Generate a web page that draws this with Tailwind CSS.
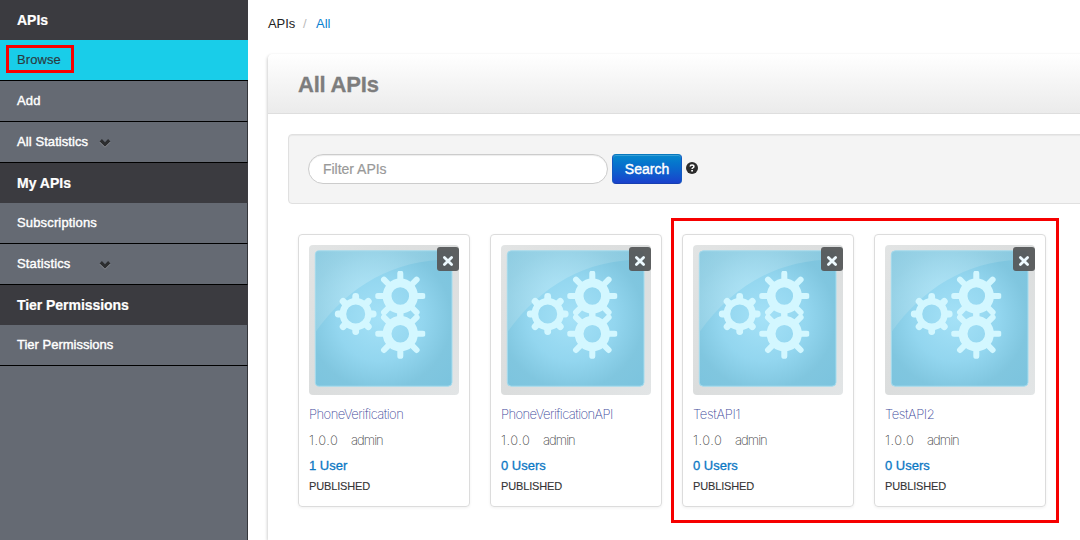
<!DOCTYPE html>
<html lang="en">
<head>
<meta charset="utf-8">
<title>All APIs</title>
<script src="https://cdn.jsdelivr.net/npm/@tailwindcss/browser@4"></script>
</head>
<body class="relative flex h-[540px] w-[1080px] overflow-hidden bg-white font-['Liberation_Sans',Arial,sans-serif] text-[13px] leading-5 text-[#333]">

<svg class="absolute size-0">
  <defs>
    <radialGradient id="sky" cx="0.47" cy="0.5" r="0.7">
      <stop offset="0" stop-color="#a4e1f7"/>
      <stop offset="0.45" stop-color="#93d6ef"/>
      <stop offset="0.75" stop-color="#80c6df"/>
      <stop offset="1" stop-color="#7cc4de"/>
    </radialGradient>
    <linearGradient id="frame" x1="0" y1="0" x2="1" y2="1">
      <stop offset="0" stop-color="#e2e4e4"/>
      <stop offset="0.5" stop-color="#dbdddd"/>
      <stop offset="1" stop-color="#e2e5e6"/>
    </linearGradient>
    <radialGradient id="gloss" gradientUnits="userSpaceOnUse" cx="58" cy="50" r="80">
      <stop offset="0" stop-color="#b4e6f7" stop-opacity="0.8"/>
      <stop offset="1" stop-color="#a0d2e2" stop-opacity="0.4"/>
    </radialGradient>
  </defs>
  <symbol id="tooth-ring" viewBox="-25 -25 50 50">
    <circle r="13.2" fill="none" stroke="#d3f7ff" stroke-width="8.8"/>
    <path d="M0-15V-22.5M0 15V22.5M-15 0H-22.5M15 0H22.5M-11-11L-16.3-16.3M11-11L16.3-16.3M-11 11L-16.3 16.3M11 11L16.3 16.3" stroke="#d3f7ff" stroke-width="6" stroke-linecap="round"/>
  </symbol>
  <symbol id="small-ring" viewBox="-25 -25 50 50">
    <circle r="12.8" fill="none" stroke="#d3f7ff" stroke-width="6.6"/>
    <path d="M0-14V-17.5M0 14V17.5M-14 0H-17.5M14 0H17.5M-10-10L-12.6-12.6M10-10L12.6-12.6M-10 10L-12.6 12.6M10 10L12.6 12.6" stroke="#d3f7ff" stroke-width="6.8" stroke-linecap="round"/>
  </symbol>
  <symbol id="tile" viewBox="0 0 150 150">
    <rect width="150" height="150" rx="4" fill="url(#frame)"/>
    <rect x="6.3" y="5.8" width="136.7" height="135.4" rx="4" fill="url(#sky)" stroke="#a5dcee"/>
    <path d="M6.5 87V10Q6.5 6 10.5 6H139Q143 6 143 10V14.5C86 14 40 40 6.5 87Z" fill="url(#gloss)"/>
    <use href="#tooth-ring" x="66.3" y="26" width="50" height="50"/>
    <use href="#tooth-ring" x="66.3" y="63.7" width="50" height="50"/>
    <use href="#small-ring" x="21.7" y="44" width="50" height="50"/>
  </symbol>
  <symbol id="chevron" viewBox="0 0 12 10">
    <path d="M.6 3.4L2.9 1.1 6 4.2 9.1 1.1 11.4 3.4 6 8.7Z" fill="#9a9da2" transform="translate(0 .8)"/>
    <path d="M.6 3.4L2.9 1.1 6 4.2 9.1 1.1 11.4 3.4 6 8.7Z" fill="#2d2e30"/>
  </symbol>
  <symbol id="close" viewBox="0 0 12 12">
    <path d="M2.4 2.4L9.6 9.6M9.6 2.4L2.4 9.6" stroke="#eefaff" stroke-width="2.8" stroke-linecap="round"/>
  </symbol>
</svg>

<aside class="flex w-[248px] shrink-0 flex-col border-r border-[#34363b] bg-[#656a73] text-white">
  <h2 class="-mr-px h-10 bg-[#3b3b40] px-[17px] pt-[10px] text-[14px] font-bold [-webkit-text-stroke:0.2px_white]">APIs</h2>
  <a class="-mr-px h-[41px] border-b border-black bg-[#19cde9] px-[17px] pt-[10px] tracking-[0.1px] text-[#2b3a40] [-webkit-text-stroke:0.15px_#2b3a40]">Browse</a>
  <a class="-mr-px h-[41px] border-r border-b border-black border-r-[#34363b] px-[17px] pt-[10px] tracking-[0.2px] [-webkit-text-stroke:0.4px_white]">Add</a>
  <a class="-mr-px flex h-[41px] border-r border-b border-black border-r-[#34363b] px-[17px] pt-[10px] [-webkit-text-stroke:0.4px_white]"><span class="w-[82px] tracking-[0.08px]">All Statistics</span><svg class="mt-[6px] h-[10px] w-3"><use href="#chevron"/></svg></a>
  <h2 class="-mr-px h-10 bg-[#3b3b40] px-[17px] pt-[10px] text-[14px] font-bold [-webkit-text-stroke:0.2px_white]">My APIs</h2>
  <a class="-mr-px h-[41px] border-r border-b border-black border-r-[#34363b] px-[17px] pt-[10px] tracking-[0.15px] [-webkit-text-stroke:0.4px_white]">Subscriptions</a>
  <a class="-mr-px flex h-[41px] border-r border-b border-black border-r-[#34363b] px-[17px] pt-[10px] [-webkit-text-stroke:0.4px_white]"><span class="w-[82px] tracking-[0.15px]">Statistics</span><svg class="mt-[6px] h-[10px] w-3"><use href="#chevron"/></svg></a>
  <h2 class="-mr-px h-10 bg-[#3b3b40] px-[17px] pt-[10px] text-[14px] font-bold tracking-[-0.05px] [-webkit-text-stroke:0.2px_white]">Tier Permissions</h2>
  <a class="-mr-px h-[41px] border-r border-b border-black border-r-[#34363b] px-[17px] pt-[10px] [-webkit-text-stroke:0.4px_white]">Tier Permissions</a>
</aside>

<main class="flex w-[852px] shrink-0 flex-col pl-5">
  <nav class="flex h-[54px] pt-[14px]">
    <span class="w-[35px] tracking-[-0.1px] text-[#222]">APIs</span><span class="w-[13px] text-[#bbb]">/</span><a class="text-[#0a7fd0]">All</a>
  </nav>
  <section class="flex grow flex-col rounded-tl-[5px] shadow-[-1px_1px_3px_rgba(0,0,0,0.18)]">
    <header class="h-[60px] rounded-tl-[5px] border-b border-[#dedede] bg-linear-to-b from-white to-[#ebebeb] pt-4 pl-[30px]">
      <h1 class="text-[22px] leading-[30px] font-bold tracking-[-0.2px] text-[#7d7d7d] [-webkit-text-stroke:0.3px_#7d7d7d]">All APIs</h1>
    </header>
    <div class="mt-5 ml-5 flex h-[70px] rounded-[4px] border border-[#e0e0e0] bg-[#f4f4f4] pt-[19px] pl-[19px] shadow-[inset_0_1px_1px_rgba(0,0,0,0.05)]">
      <div class="h-[30px] w-[300px] rounded-full border border-[#ccc] bg-white pt-1 pl-[14px] text-[14px] tracking-[-0.02px] text-[#999] shadow-[inset_0_1px_1px_rgba(0,0,0,0.075)] [-webkit-text-stroke:0.2px_#999]">Filter APIs</div>
      <button class="ml-1 h-[30px] w-[70px] rounded-[4px] border border-[#1459c0] border-t-[#0878bd] border-b-[#163fb0] bg-linear-to-b from-[#0788cc] to-[#1a40cc] text-[14px] leading-5 text-white shadow-[inset_0_1px_0_rgba(255,255,255,0.2)] [-webkit-text-stroke:0.4px_white]">Search</button>
      <svg class="mt-2 ml-1 size-3" viewBox="0 0 12 12"><circle cx="6" cy="6" r="6" fill="#2c2c2c"/><path d="M4.2 4.6Q4.2 3 6 3Q7.9 3 7.9 4.5Q7.9 5.4 6.8 5.9Q6.1 6.2 6.1 6.9" fill="none" stroke="white" stroke-width="1.5"/><path d="M5.2 8H7V9.5H5.2Z" fill="white"/></svg>
    </div>
    <div class="mt-[30px] ml-[30px] flex gap-5">
      <article class="relative h-[273px] w-[172px] rounded-[4px] border border-[#dcdcdc] p-[10px] shadow-[0_1px_3px_rgba(0,0,0,0.06)]">
        <svg class="block size-[150px]"><use href="#tile"/></svg>
        <button class="absolute top-3 right-[10px] flex h-6 w-[22px] justify-center rounded-[3px] bg-[#56595a]/95 pt-2"><svg class="size-3"><use href="#close"/></svg></button>
        <h3 class="mt-[9px] font-['Inter',sans-serif] text-[13px] leading-5 font-extralight tracking-[-0.54px] text-[#3f4c9c]">PhoneVerification</h3>
        <p class="mt-[6px] flex font-['Inter',sans-serif] text-[13px] leading-5 font-extralight text-[#444]"><span class="w-[42px] tracking-[0.5px]">1.0.0</span><span class="tracking-[-0.95px]">admin</span></p>
        <p class="mt-[6px] text-[#0b78c4] [-webkit-text-stroke:0.3px_#0b78c4]">1 User</p>
        <p class="text-[11px] tracking-[-0.15px] text-[#333] [-webkit-text-stroke:0.1px_#333]">PUBLISHED</p>
      </article>
      <article class="relative h-[273px] w-[172px] rounded-[4px] border border-[#dcdcdc] p-[10px] shadow-[0_1px_3px_rgba(0,0,0,0.06)]">
        <svg class="block size-[150px]"><use href="#tile"/></svg>
        <button class="absolute top-3 right-[10px] flex h-6 w-[22px] justify-center rounded-[3px] bg-[#56595a]/95 pt-2"><svg class="size-3"><use href="#close"/></svg></button>
        <h3 class="mt-[9px] font-['Inter',sans-serif] text-[13px] leading-5 font-extralight tracking-[-0.58px] text-[#3f4c9c]">PhoneVerificationAPI</h3>
        <p class="mt-[6px] flex font-['Inter',sans-serif] text-[13px] leading-5 font-extralight text-[#444]"><span class="w-[42px] tracking-[0.5px]">1.0.0</span><span class="tracking-[-0.95px]">admin</span></p>
        <p class="mt-[6px] text-[#0b78c4] [-webkit-text-stroke:0.3px_#0b78c4]">0 Users</p>
        <p class="text-[11px] tracking-[-0.15px] text-[#333] [-webkit-text-stroke:0.1px_#333]">PUBLISHED</p>
      </article>
      <article class="relative h-[273px] w-[172px] rounded-[4px] border border-[#dcdcdc] p-[10px] shadow-[0_1px_3px_rgba(0,0,0,0.06)]">
        <svg class="block size-[150px]"><use href="#tile"/></svg>
        <button class="absolute top-3 right-[10px] flex h-6 w-[22px] justify-center rounded-[3px] bg-[#56595a]/95 pt-2"><svg class="size-3"><use href="#close"/></svg></button>
        <h3 class="mt-[9px] font-['Inter',sans-serif] text-[13px] leading-5 font-extralight tracking-[-0.3px] text-[#3f4c9c]">TestAPI1</h3>
        <p class="mt-[6px] flex font-['Inter',sans-serif] text-[13px] leading-5 font-extralight text-[#444]"><span class="w-[42px] tracking-[0.5px]">1.0.0</span><span class="tracking-[-0.95px]">admin</span></p>
        <p class="mt-[6px] text-[#0b78c4] [-webkit-text-stroke:0.3px_#0b78c4]">0 Users</p>
        <p class="text-[11px] tracking-[-0.15px] text-[#333] [-webkit-text-stroke:0.1px_#333]">PUBLISHED</p>
      </article>
      <article class="relative h-[273px] w-[172px] rounded-[4px] border border-[#dcdcdc] p-[10px] shadow-[0_1px_3px_rgba(0,0,0,0.06)]">
        <svg class="block size-[150px]"><use href="#tile"/></svg>
        <button class="absolute top-3 right-[10px] flex h-6 w-[22px] justify-center rounded-[3px] bg-[#56595a]/95 pt-2"><svg class="size-3"><use href="#close"/></svg></button>
        <h3 class="mt-[9px] font-['Inter',sans-serif] text-[13px] leading-5 font-extralight tracking-[-0.4px] text-[#3f4c9c]">TestAPI2</h3>
        <p class="mt-[6px] flex font-['Inter',sans-serif] text-[13px] leading-5 font-extralight text-[#444]"><span class="w-[42px] tracking-[0.5px]">1.0.0</span><span class="tracking-[-0.95px]">admin</span></p>
        <p class="mt-[6px] text-[#0b78c4] [-webkit-text-stroke:0.3px_#0b78c4]">0 Users</p>
        <p class="text-[11px] tracking-[-0.15px] text-[#333] [-webkit-text-stroke:0.1px_#333]">PUBLISHED</p>
      </article>
    </div>
  </section>
</main>

<!-- highlight boxes over the page -->
<div class="absolute top-[45px] left-[6px] h-7 w-[68px] border-3 border-[#f60000]"></div>
<div class="absolute top-[218px] left-[671px] h-[305px] w-[388px] border-3 border-[#f60000]"></div>
</body>
</html>
